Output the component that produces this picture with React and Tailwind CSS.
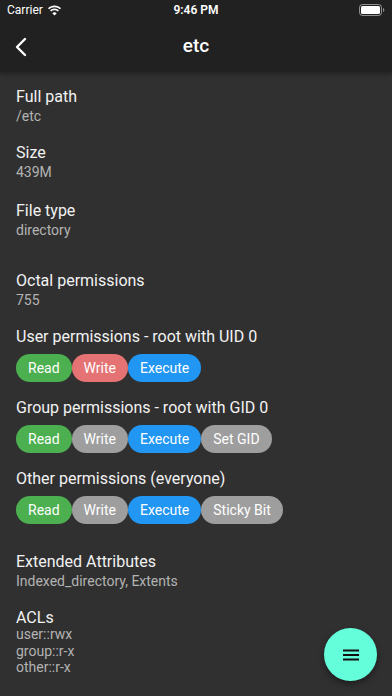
import React from "react";

const chipColors = {
  green: "bg-[#4caf50]",
  red: "bg-[#e57373]",
  blue: "bg-[#2196f3]",
  gray: "bg-[#9e9e9e]",
};

function Chip({ label, color }) {
  return (
    <span className={`${chipColors[color]} h-[28px] px-[12px] rounded-full text-white text-[14px] leading-[28px] whitespace-nowrap`}>
      {label}
    </span>
  );
}

function Field({ title, value, className = "" }) {
  return (
    <div className={`flex flex-col ${className}`}>
      <div className="text-[16px] leading-[20px] text-[#f2f2f2]">{title}</div>
      <div className="text-[14px] leading-[17px] text-[#b3b3b3] mt-[1px]">{value}</div>
    </div>
  );
}

function Perm({ title, chips, className = "" }) {
  return (
    <div className={`flex flex-col ${className}`}>
      <div className="text-[16px] leading-[20px] text-[#f2f2f2]">{title}</div>
      <div className="flex mt-[7px] gap-[0px]">
        {chips.map((c) => (
          <Chip key={c[0]} label={c[0]} color={c[1]} />
        ))}
      </div>
    </div>
  );
}

export default function App() {
  return (
    <div
      className="w-[392px] h-[696px] bg-[#303030] relative overflow-hidden flex flex-col"
      style={{ fontFamily: "Roboto, 'Noto Sans', sans-serif" }}
    >
      <div className="bg-[#212121] shadow-[0_2px_4px_rgba(0,0,0,0.3)] z-10">
        <div className="h-[20px] flex items-center justify-between px-[7px] text-white text-[12px]">
          <div className="flex items-center gap-[4px] w-[100px]">
            <span>Carrier</span>
            <svg width="15" height="11" viewBox="0 0 15 11" fill="white">
              <path d="M7.5 2.2c2.1 0 4 .8 5.4 2.1l1.1-1.1C12.3 1.6 10 .6 7.5.6S2.7 1.6 1 3.2l1.1 1.1C3.5 3 5.4 2.2 7.5 2.2z" />
              <path d="M7.5 5.2c1.3 0 2.4.5 3.3 1.3l1.1-1.1C10.7 4.3 9.2 3.6 7.5 3.6S4.3 4.3 3.1 5.4l1.1 1.1c.9-.8 2-1.3 3.3-1.3z" />
              <path d="M7.5 10.4 9.7 8.2C9.1 7.6 8.4 7.3 7.5 7.3S5.9 7.6 5.3 8.2z" />
            </svg>
          </div>
          <div className="font-semibold">9:46 PM</div>
          <div className="w-[100px] flex justify-end">
            <svg width="26" height="12" viewBox="0 0 26 12">
              <rect x="0.5" y="0.5" width="22" height="11" rx="3" fill="none" stroke="white" strokeOpacity="0.5" />
              <rect x="2" y="2" width="19" height="8" rx="1.5" fill="white" />
              <path d="M24 4v4c.8-.3 1.3-1.1 1.3-2S24.8 4.3 24 4z" fill="white" fillOpacity="0.5" />
            </svg>
          </div>
        </div>
        <div className="h-[52px] flex items-center relative">
          <svg className="absolute left-[14px] top-[17px]" width="14" height="20" viewBox="0 0 14 20" fill="none">
            <path d="M11 2 3 10l8 8" stroke="white" strokeWidth="2.4" strokeLinecap="round" strokeLinejoin="round" />
          </svg>
          <div className="flex-1 text-center text-white text-[19px] font-medium">etc</div>
        </div>
      </div>

      <div className="flex flex-col px-[16px] pt-[15px]">
        <Field title="Full path" value="/etc" />
        <Field title="Size" value="439M" className="mt-[18px]" />
        <Field title="File type" value="directory" className="mt-[20px]" />
        <Field title="Octal permissions" value="755" className="mt-[32px]" />
        <Perm
          title="User permissions - root with UID 0"
          className="mt-[18px]"
          chips={[["Read", "green"], ["Write", "red"], ["Execute", "blue"]]}
        />
        <Perm
          title="Group permissions - root with GID 0"
          className="mt-[16px]"
          chips={[["Read", "green"], ["Write", "gray"], ["Execute", "blue"], ["Set GID", "gray"]]}
        />
        <Perm
          title="Other permissions (everyone)"
          className="mt-[16px]"
          chips={[["Read", "green"], ["Write", "gray"], ["Execute", "blue"], ["Sticky Bit", "gray"]]}
        />
        <Field title="Extended Attributes" value="Indexed_directory, Extents" className="mt-[28px]" />
        <div className="flex flex-col mt-[18px]">
          <div className="text-[16px] leading-[20px] text-[#f2f2f2]">ACLs</div>
          <div className="flex flex-col mt-[-2px] text-[14px] leading-[16.5px] text-[#b3b3b3]">
            <div>user::rwx</div>
            <div>group::r-x</div>
            <div>other::r-x</div>
          </div>
        </div>
      </div>

      <div className="absolute left-[324px] top-[628px] w-[53px] h-[53px] rounded-full bg-[#64ffda] shadow-[0_3px_6px_rgba(0,0,0,0.4)] flex items-center justify-center">
        <svg width="16" height="12" viewBox="0 0 16 12">
          <rect x="0" y="0.5" width="16" height="2" fill="#111" />
          <rect x="0" y="5" width="16" height="2" fill="#111" />
          <rect x="0" y="9.5" width="16" height="2" fill="#111" />
        </svg>
      </div>
    </div>
  );
}
